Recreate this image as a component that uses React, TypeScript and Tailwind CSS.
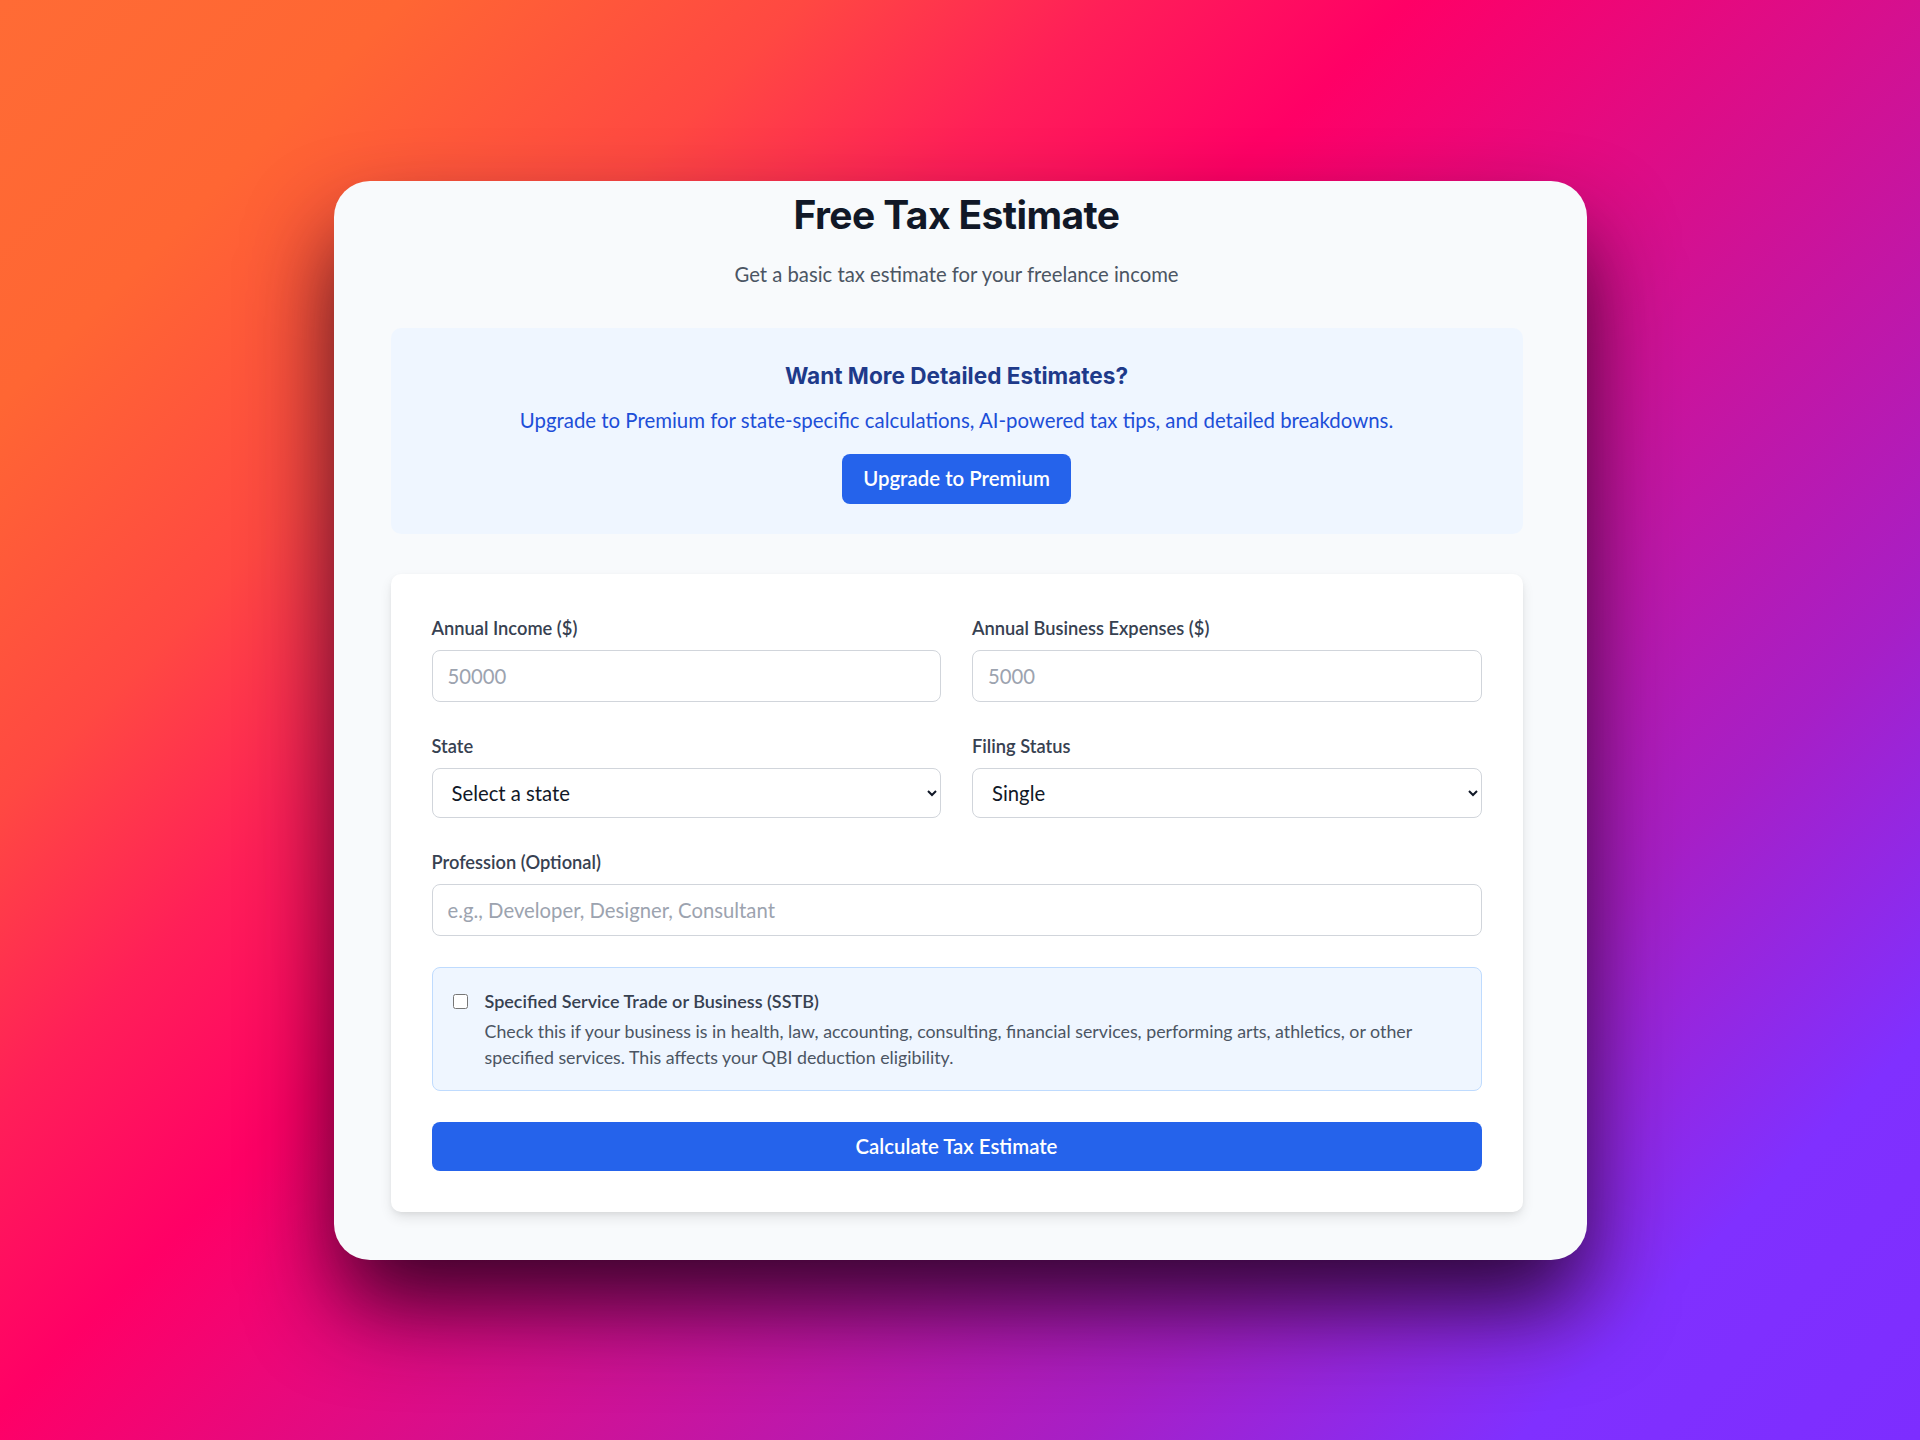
import { useState } from 'react';

const body = { fontFamily: 'Lato, "Noto Sans", sans-serif' };
const head = { fontFamily: 'Inter, "Noto Sans", sans-serif' };

function Field({ label, children }: { label: string; children: React.ReactNode }) {
  return (
    <div className="flex flex-col">
      <label className="mb-[9px] text-[18.3px] leading-[26px] font-semibold text-[#374151]">{label}</label>
      {children}
    </div>
  );
}

export default function App() {
  const [income, setIncome] = useState('');
  const [expenses, setExpenses] = useState('');
  const [state, setState] = useState('');
  const [filing, setFiling] = useState('single');
  const [profession, setProfession] = useState('');
  const [sstb, setSstb] = useState(false);

  const inputCls =
    'h-[52px] w-full rounded-[8px] border border-[#d1d5db] bg-white px-[15px] text-[20.3px] text-[#111827] placeholder:text-[#9ca3af] outline-none';
  const selectCls =
    'h-[50px] w-full rounded-[8px] border border-[#d1d5db] bg-white px-[15px] text-[20.3px] text-[#111827] outline-none';

  return (
    <div
      className="flex min-h-[1440px] w-full items-center justify-center bg-[linear-gradient(135deg,#ff6b35_0%,#ff6633_12%,#ff4842_24%,#ff1f58_33%,#ff0066_42%,#d5108f_57%,#a71fc6_75%,#8030ff_88%,#7d2dff_100%)]"
      style={body}
    >
      <div className="h-[1079px] w-[1253px] rounded-[36px] bg-[#f8fafc] pl-[57px] pr-[64px] pt-[11px] shadow-[0_50px_90px_-5px_rgba(25,0,25,0.85)]">
        <h1 className="text-center text-[39px] leading-[46px] font-bold tracking-[-0.6px] text-[#111827]" style={head}>
          Free Tax Estimate
        </h1>
        <p className="mt-[21px] text-center text-[20.3px] leading-[30px] text-[#4b5563]">
          Get a basic tax estimate for your freelance income
        </p>

        <div className="mt-[39px] flex flex-col items-center rounded-[10px] bg-[#eff6ff] px-8 pt-[32px] pb-[30px]">
          <h2 className="text-[22.6px] leading-[32px] font-bold text-[#1e3a8a]" style={head}>
            Want More Detailed Estimates?
          </h2>
          <p className="mt-[13px] text-[20.4px] leading-[30px] text-[#1d4ed8]">
            Upgrade to Premium for state-specific calculations, AI-powered tax tips, and detailed breakdowns.
          </p>
          <button className="mt-[19px] h-[50px] rounded-[8px] bg-[#2563eb] px-[21px] text-[20.4px] font-semibold text-white">
            Upgrade to Premium
          </button>
        </div>

        <div className="mt-[40px] rounded-[10px] bg-white p-[41px] shadow-[0_6px_14px_-2px_rgba(0,0,0,0.12),0_2px_6px_-2px_rgba(0,0,0,0.08)]">
          <div className="grid grid-cols-2 gap-x-[31px] gap-y-[31px]">
            <Field label="Annual Income ($)">
              <input className={inputCls} placeholder="50000" value={income} onChange={(e) => setIncome(e.target.value)} />
            </Field>
            <Field label="Annual Business Expenses ($)">
              <input className={inputCls} placeholder="5000" value={expenses} onChange={(e) => setExpenses(e.target.value)} />
            </Field>
            <Field label="State">
              <select className={selectCls} value={state} onChange={(e) => setState(e.target.value)}>
                <option value="">Select a state</option>
                <option value="CA">California</option>
                <option value="NY">New York</option>
                <option value="TX">Texas</option>
              </select>
            </Field>
            <Field label="Filing Status">
              <select className={selectCls} value={filing} onChange={(e) => setFiling(e.target.value)}>
                <option value="single">Single</option>
                <option value="married">Married Filing Jointly</option>
                <option value="hoh">Head of Household</option>
              </select>
            </Field>
            <div className="col-span-2">
              <Field label="Profession (Optional)">
                <input
                  className={inputCls}
                  placeholder="e.g., Developer, Designer, Consultant"
                  value={profession}
                  onChange={(e) => setProfession(e.target.value)}
                />
              </Field>
            </div>
            <div className="col-span-2 flex items-start gap-[17px] rounded-[8px] border border-[#bfdbfe] bg-[#eff6ff] p-[20px]">
              <input
                type="checkbox"
                checked={sstb}
                onChange={(e) => setSstb(e.target.checked)}
                className="mt-[6px] h-[15px] w-[15px] shrink-0"
              />
              <div>
                <div className="text-[18px] leading-[26px] font-semibold text-[#374151]">
                  Specified Service Trade or Business (SSTB)
                </div>
                <p className="mt-[4px] text-[17.8px] leading-[26px] text-[#4b5563]">
                  Check this if your business is in health, law, accounting, consulting, financial services, performing arts,
                  athletics, or other specified services. This affects your QBI deduction eligibility.
                </p>
              </div>
            </div>
            <button className="col-span-2 h-[49px] rounded-[8px] bg-[#2563eb] text-[20.4px] font-semibold text-white">
              Calculate Tax Estimate
            </button>
          </div>
        </div>
      </div>
    </div>
  );
}
